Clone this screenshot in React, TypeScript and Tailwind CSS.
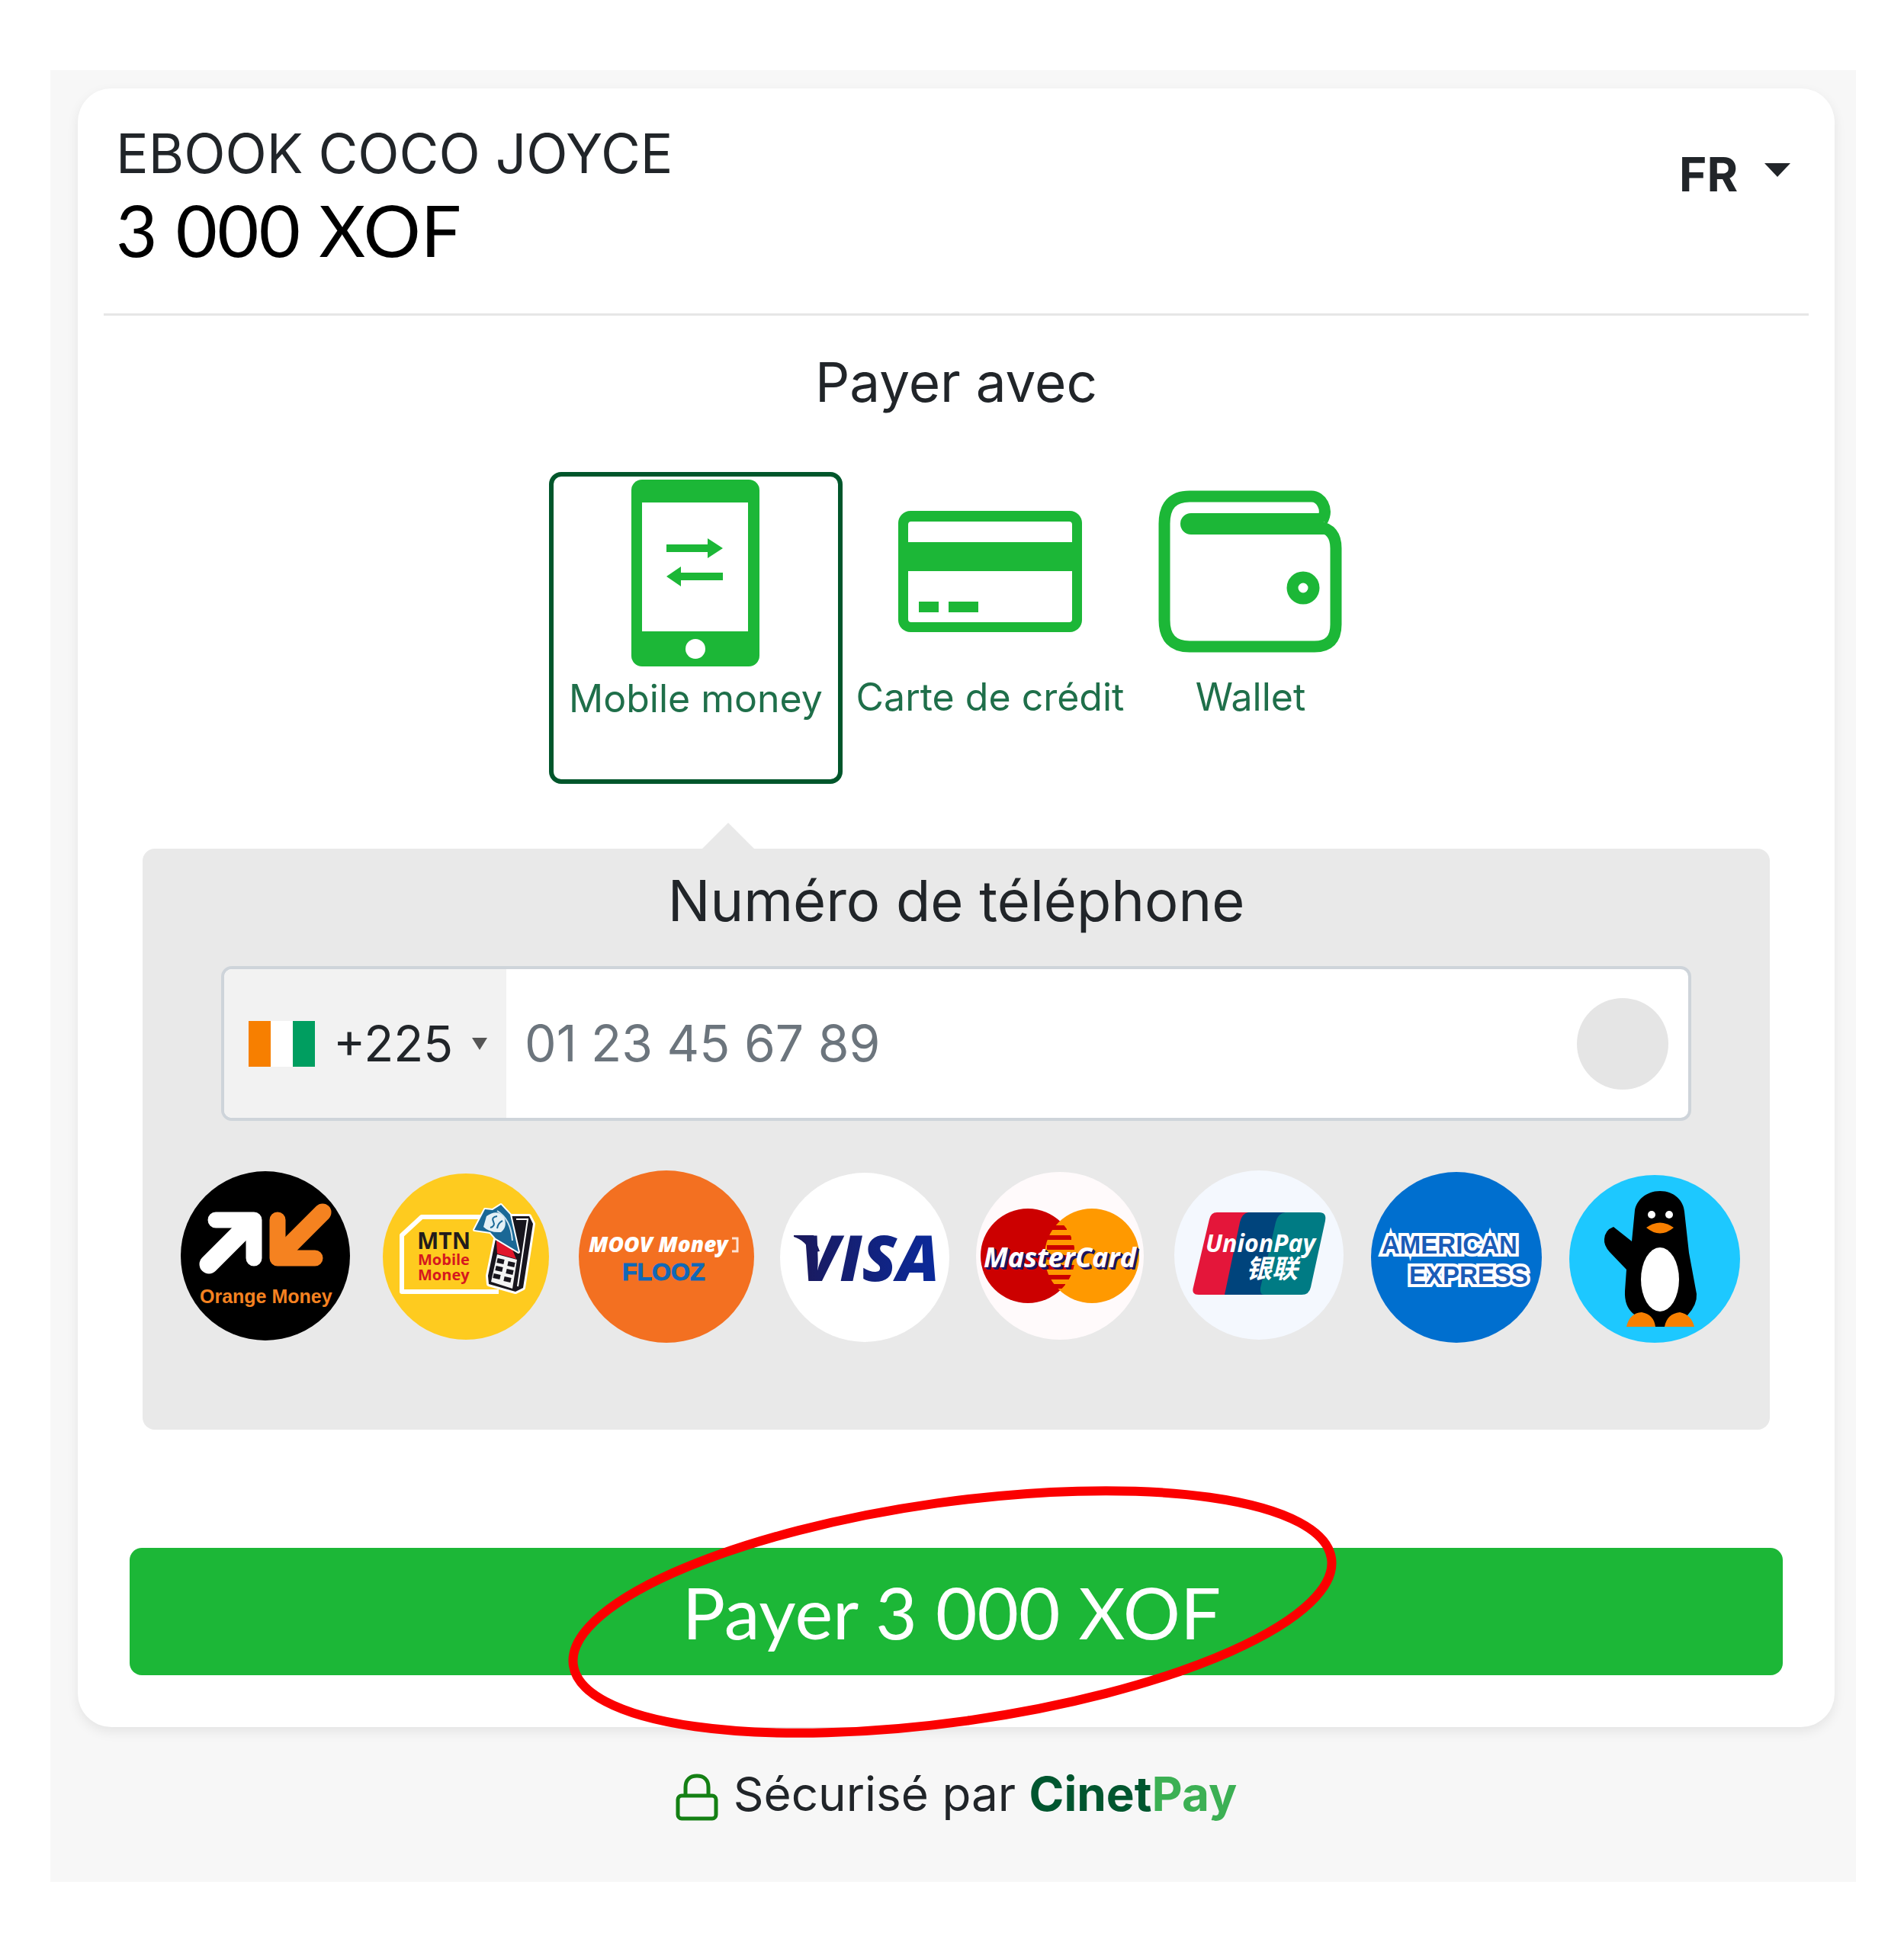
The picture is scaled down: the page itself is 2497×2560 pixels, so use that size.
import { useState } from "react";
import type { ComponentType } from "react";

const GREEN = "#1cb737";

const PhoneIcon = () => (
  <svg viewBox="0 0 245 245" className="size-[245px]" aria-hidden="true">
    <rect x="38" width="168" height="245" rx="14" fill={GREEN} />
    <rect x="52" y="30" width="139" height="169" fill="#fff" />
    <path d="M84 85h54v-8l20 13-20 13v-8H84zM158 122h-55v-8l-19 13 19 13v-8h55z" fill={GREEN} />
    <circle cx="122" cy="222" r="13" fill="#fff" />
  </svg>
);

const CardIcon = () => (
  <svg viewBox="0 0 245 245" className="size-[245px]" aria-hidden="true">
    <rect x="2" y="43" width="241" height="159" rx="16" fill={GREEN} />
    <rect x="15" y="57" width="215" height="132" rx="4" fill="#fff" />
    <path d="M15 84h215v38H15zM29 162h26v14H29zM68 162h39v14H68z" fill={GREEN} />
  </svg>
);

const WalletIcon = () => (
  <svg viewBox="0 0 245 245" className="size-[245px]" aria-hidden="true">
    <path
      d="M216 56C225 40 214 24 202 24H42Q9 24 9 60V186Q9 221 42 221H206Q234 221 234 192V92Q234 67 212 64"
      fill="none"
      stroke={GREEN}
      strokeWidth="15"
    />
    <path d="M44 46H218V59L224 74H44A14 14 0 0 1 44 46Z" fill={GREEN} />
    <circle cx="191" cy="144" r="14" fill="none" stroke={GREEN} strokeWidth="15" />
  </svg>
);

const OrangeMoney = () => (
  <svg viewBox="0 0 230 230" className="size-[230px]" role="img">
    <circle cx="115" cy="114" r="111" fill="#000" />
    <g fill="none" strokeWidth="21" strokeLinecap="round" strokeLinejoin="round">
      <path d="M50 67H100V117" stroke="#fff" />
      <path d="M41 125L96 70" stroke="#fff" strokeWidth="25" />
      <path d="M131 67V117H180" stroke="#f58220" />
      <path d="M190 57L134 113" stroke="#f58220" strokeWidth="23" />
    </g>
    <text x="29" y="176" fontFamily='"Liberation Sans"' fontWeight="700" fontSize="25" fill="#f58220">
      Orange Money
    </text>
  </svg>
);

const MtnMoney = () => (
  <svg viewBox="0 0 230 230" className="size-[230px]" role="img">
    <circle cx="117" cy="115" r="109" fill="#fecb1f" />
    <path d="M160 161H33V87L59 63H190" fill="none" stroke="#fff" strokeWidth="6" strokeLinejoin="round" />
    <text x="53" y="105" fontFamily='"Open Sans"' fontWeight="700" fontSize="30" fill="#221c1c">
      MTN
    </text>
    <g fontFamily='"Open Sans"' fontWeight="700" fontSize="20" fill="#d6181e">
      <text x="54" y="126">Mobile</text>
      <text x="54" y="146">Money</text>
    </g>
    <path
      d="M176 62L200 62L205 72L192 156L182 161L147 151L146 140L156 92Z"
      fill="#17151d"
      stroke="#fff"
      strokeWidth="6"
      strokeLinejoin="round"
      paintOrder="stroke"
    />
    <path d="M183 66L198 66L185 154" fill="none" stroke="#fff" strokeWidth="2" />
    <path d="M158 112L184 119L178 157L150 148Z" fill="#f4f4f4" />
    <path d="M157 94L178 106L183 118L158 111Z" fill="#e0162b" />
    <path
      d="M128 80L142 53L152 54L163 47L175 60L186 109L156 91L149 83Z"
      fill="#1a6896"
      stroke="#fff"
      strokeWidth="4"
      strokeLinejoin="round"
      paintOrder="stroke"
    />
    <path d="M144 62Q158 52 167 63Q172 76 163 83Q148 84 140 76Z" fill="#e4f0f6" />
    <path d="M158 62q-8 1-5 7t-4 8M165 68q-6 3-7 10" fill="none" stroke="#1a6896" strokeWidth="2" />
    <path d="M158 55Q176 66 178 94" fill="none" stroke="#cfe3ee" strokeWidth="2" />
    <path
      d="M158 120l9 2M156 130l9 2M153 140l9 2M172 124l9 2M170 134l9 2M167 144l9 2"
      stroke="#17151d"
      strokeWidth="6"
    />
  </svg>
);

const MoovMoney = () => (
  <svg viewBox="0 0 230 230" className="size-[230px] overflow-visible" role="img">
    <ellipse cx="120" cy="115" rx="115" ry="113" fill="#f37021" />
    <text
      x="18"
      y="109"
      fontFamily='"Open Sans"'
      fontWeight="800"
      fontStyle="italic"
      fontSize="28"
      fill="#fff"
    >
      MOOV Money
    </text>
    <path d="M206 91h7v17h-7" fill="none" stroke="#fff" strokeWidth="3" opacity=".8" />
    <text x="62" y="146" fontFamily='"Liberation Sans"' fontWeight="700" fontSize="32" fill="#1068b8" stroke="#1068b8">
      FLOOZ
    </text>
  </svg>
);

const Visa = () => (
  <svg viewBox="0 0 230 230" className="size-[230px]" role="img">
    <defs>
      <linearGradient id="visa">
        <stop stopColor="#1a1a5e" />
        <stop offset="1" stopColor="#0a2a9c" />
      </linearGradient>
    </defs>
    <circle cx="119" cy="116" r="111" fill="#fff" />
    <path d="M26 87H52L60 108L48 110Q42 94 26 89Z" fill="#1a1a5e" />
    <text x="35" y="147" fontFamily='"Open Sans"' fontWeight="800" fontStyle="italic" fontSize="83" fill="url(#visa)">
      VISA
    </text>
  </svg>
);

const MasterCard = () => (
  <svg viewBox="0 0 230 230" className="size-[230px]" role="img">
    <defs>
      <clipPath id="mc-left">
        <circle cx="73" cy="114" r="62" />
      </clipPath>
    </defs>
    <circle cx="115" cy="114" r="110" fill="#fffafb" />
    <circle cx="73" cy="114" r="62" fill="#cc0000" />
    <circle cx="157" cy="114" r="62" fill="#ff9900" />
    <g clipPath="url(#mc-left)">
      <path
        d="M98 77H124M98 90H130M98 103H134M98 116H134M98 129H134M98 142H130M98 154H122"
        stroke="#cc0000"
        strokeWidth="6"
      />
    </g>
    {/* the stacked shadow gives the wordmark its navy edge */}
    <text
      x="15"
      y="129"
      fontFamily='"Open Sans"'
      fontWeight="700"
      fontStyle="italic"
      fontSize="36"
      fill="#fff"
      className="[text-shadow:1px_1px_0_#1b1464,2px_2px_0_#1b1464,3px_3px_0_#1b1464]"
    >
      MasterCard
    </text>
  </svg>
);

const UnionPay = () => (
  <svg viewBox="0 0 230 230" className="size-[230px]" role="img">
    <circle cx="115" cy="113" r="111" fill="#f4f8fe" />
    <path d="M60 57H104L84 165H36Q26 165 29 155L50 66Q52 57 60 57Z" fill="#e4163a" />
    <path d="M101 57H150L130 165H70L90 70Q93 58 101 57Z" fill="#00447c" />
    <path d="M150 57H194Q204 57 202 68L183 155Q181 165 171 165H122Q116 165 117 156L137 70Q140 58 150 57Z" fill="#007b84" />
    <text x="45" y="109" fontFamily='"Open Sans"' fontWeight="700" fontStyle="italic" fontSize="32" fill="#fff">
      UnionPay
    </text>
    <text
      x="98"
      y="143"
      fontFamily='"Noto Sans CJK SC", sans-serif'
      fontWeight="700"
      fontStyle="italic"
      fontSize="34"
      fill="#fff"
    >
      银联
    </text>
  </svg>
);

const Amex = () => (
  <svg viewBox="0 0 230 230" className="size-[230px]" role="img">
    <circle cx="114" cy="116" r="112" fill="#006fcf" />
    <g
      fontFamily='"Liberation Sans"'
      fontWeight="700"
      fontSize="33"
      fill="#1a5cb8"
      stroke="#fff"
      strokeWidth="8"
      paintOrder="stroke"
    >
      <text x="16" y="111">AMERICAN</text>
      <text x="52" y="151">EXPRESS</text>
    </g>
  </svg>
);

const Wave = () => (
  <svg viewBox="0 0 230 230" className="size-[230px]" role="img">
    <ellipse cx="113" cy="118" rx="112" ry="110" fill="#1dc8ff" />
    <path
      d="M120 29C139 29 151 42 152 56L158 110L168 164Q169 178 156 192L126 207H114L85 190Q73 180 74 160L76 132L54 109Q46 100 47 92Q48 80 59 76L83 95L87 54C89 42 101 29 120 29Z"
      fill="#000"
    />
    <circle cx="109" cy="60" r="5" fill="#fff" />
    <circle cx="132" cy="60" r="5" fill="#fff" />
    <path d="M102 77Q120 64 138 77Q120 92 102 77Z" fill="#f77f00" />
    <ellipse cx="120" cy="145" rx="25" ry="42" fill="#fff" />
    <path d="M76 207Q80 189 96 188Q112 191 114 207ZM126 207Q129 190 146 188Q161 191 165 207Z" fill="#f77f00" />
  </svg>
);

const LockIcon = () => (
  <svg viewBox="0 0 56 62" className="mt-2 h-[62px] w-[56px]" fill="none" stroke="#148014" strokeWidth="5" aria-hidden="true">
    <rect x="3" y="29" width="50" height="30" rx="5" />
    <path d="M13 29V18C13 8 19 3 28 3S43 8 43 18V29" />
  </svg>
);

const methods: { label: string; Icon: ComponentType; width: string }[] = [
  { label: "Mobile money", Icon: PhoneIcon, width: "w-[385px]" },
  { label: "Carte de crédit", Icon: CardIcon, width: "w-[387px]" },
  { label: "Wallet", Icon: WalletIcon, width: "w-[296px]" },
];

const logos: { name: string; Logo: ComponentType }[] = [
  { name: "Orange Money", Logo: OrangeMoney },
  { name: "MTN Mobile Money", Logo: MtnMoney },
  { name: "Moov Money Flooz", Logo: MoovMoney },
  { name: "Visa", Logo: Visa },
  { name: "MasterCard", Logo: MasterCard },
  { name: "UnionPay", Logo: UnionPay },
  { name: "American Express", Logo: Amex },
  { name: "Wave", Logo: Wave },
];

const Header = () => (
  <header className="mx-[34px] flex items-start justify-between border-b-[3px] border-[#e6e6e6] pt-[43px] pr-6 pb-[52px] pl-4">
    <div>
      <h1 className="text-[71px] leading-[84px]">EBOOK COCO JOYCE</h1>
      <p className="font-[Lato] text-[94px] leading-[116px] text-black">3 000 XOF</p>
    </div>
    <div className="flex items-center gap-[34px] pt-7">
      <select aria-label="Langue" className="appearance-none text-[62px] leading-[84px] font-bold">
        <option>FR</option>
      </select>
      <svg viewBox="0 0 34 18" className="mb-3 h-[18px] w-[34px]" aria-hidden="true">
        <path d="M0 0h34L17 18z" fill="#212529" />
      </svg>
    </div>
  </header>
);

const PhonePanel = () => (
  <section className="relative mx-[85px] mt-[85px] rounded-[16px] bg-[#e9e9e9] pt-[26px] pb-[112px]">
    <svg viewBox="0 0 68 34" className="absolute bottom-full left-[734px] h-[34px] w-[68px]" aria-hidden="true">
      <path d="M34 0l34 34H0z" fill="#e9e9e9" />
    </svg>
    <label htmlFor="phone" className="block text-center text-[74px] leading-[84px]">
      Numéro de téléphone
    </label>
    <div className="mx-[103px] mt-11 flex h-[203px] overflow-hidden rounded-[14px] border-4 border-[#ced4da] bg-white">
      <div className="flex w-[370px] shrink-0 items-center bg-[#f2f2f2] pl-8">
        <svg viewBox="0 0 87 60" className="h-[60px] w-[87px]" aria-hidden="true">
          <path d="M0 0h29v60H0z" fill="#f77f00" />
          <path d="M29 0h29v60H29z" fill="#fff" />
          <path d="M58 0h29v60H58z" fill="#009e60" />
        </svg>
        <select aria-label="Indicatif" className="ml-6 appearance-none text-[64px] leading-[84px]">
          <option>+225</option>
        </select>
        <svg viewBox="0 0 20 16" className="ml-6 h-4 w-5" aria-hidden="true">
          <path d="M0 0h20L10 16z" fill="#555" />
        </svg>
      </div>
      <input
        id="phone"
        type="tel"
        placeholder="01 23 45 67 89"
        className="min-w-0 flex-1 px-6 text-[66px] outline-none placeholder:text-[#6c757d]"
      />
      <span className="mr-[26px] size-[120px] shrink-0 self-center rounded-full bg-[#e5e5e5]" />
    </div>
    <ul className="mt-[63px] flex justify-between pr-[34px] pl-[46px]">
      {logos.map(({ name, Logo }) => (
        <li key={name}>
          <Logo />
        </li>
      ))}
    </ul>
  </section>
);

const App = () => {
  const [method, setMethod] = useState("Mobile money");

  return (
    <div className="bg-white pt-[92px] pr-[63px] pb-[92px] pl-[66px] font-[Inter,sans-serif] text-[#212529]">
      <main className="bg-[#f7f7f7] pt-6 pr-7 pb-[73px] pl-9">
        <div className="rounded-[44px] bg-white pb-[68px] shadow-[0_6px_16px_rgba(0,0,0,0.08)]">
          <Header />

          <h2 className="mt-[45px] text-center text-[71px] leading-[84px]">Payer avec</h2>

          <div className="mt-[76px] flex h-[409px] justify-center">
            {methods.map(({ label, Icon, width }) => (
              <button
                key={label}
                type="button"
                aria-pressed={method === label}
                onClick={() => setMethod(label)}
                className={`flex shrink-0 flex-col items-center text-[50px] leading-[60px] text-[#1f6f4a] ${width} ${
                  method === label ? "rounded-[16px] border-[6px] border-[#00562b] pt-1" : "pt-2"
                }`}
              >
                <Icon />
                <span className="mt-3 whitespace-nowrap">{label}</span>
              </button>
            ))}
          </div>

          <PhonePanel />

          <div className="relative mx-[68px] mt-[155px]">
            <button
              type="button"
              className="block h-[167px] w-full rounded-[16px] bg-[#1cb737] pr-3 font-[Lato] text-[94px] leading-[116px] text-white"
            >
              Payer 3 000 XOF
            </button>
            {/* hand-drawn style ring around the amount */}
            <svg
              viewBox="0 0 1030 350"
              className="pointer-events-none absolute top-1/2 left-1/2 h-[350px] w-[1030px] -translate-1/2"
              aria-hidden="true"
            >
              <ellipse
                cx="510"
                cy="175"
                rx="502"
                ry="144"
                transform="rotate(-8 510 175)"
                fill="none"
                stroke="#fb0000"
                strokeWidth="12"
              />
            </svg>
          </div>
        </div>

        <footer className="mt-[46px] flex items-center justify-center gap-5 text-[62px] leading-[84px]">
          <LockIcon />
          <p>
            Sécurisé par{" "}
            <strong className="font-bold text-[#00562f]">
              Cinet<span className="text-[#3cb054]">Pay</span>
            </strong>
          </p>
        </footer>
      </main>
    </div>
  );
};

export default App;
